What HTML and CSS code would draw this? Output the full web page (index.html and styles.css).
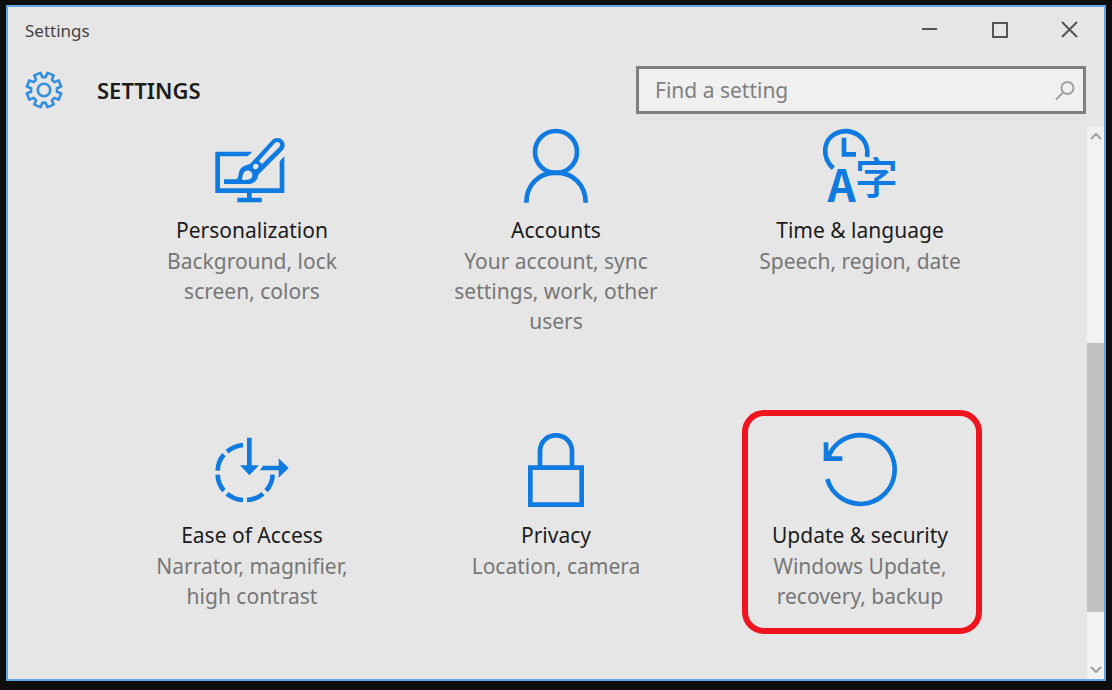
FILE: index.html
```html
<!DOCTYPE html>
<html lang="en">
<head>
<meta charset="utf-8">
<meta name="viewport" content="width=device-width, initial-scale=1">
<title>Settings</title>
<link rel="stylesheet" href="styles.css">
</head>
<body>
<div class="window">
  <div class="titlebar">
    <span class="titlebar-name">Settings</span>
    <div class="window-controls">
      <button type="button" class="window-button" aria-label="Minimize"><svg width="18" height="18" viewBox="0 0 18 18"><path d="M2 8h15"/></svg></button>
      <button type="button" class="window-button" aria-label="Maximize"><svg width="18" height="18" viewBox="0 0 18 18"><rect x="3" y="2" width="14" height="14"/></svg></button>
      <button type="button" class="window-button" aria-label="Close"><svg width="18" height="18" viewBox="0 0 18 18"><path d="M2 1l15 15M17 1L2 16"/></svg></button>
    </div>
  </div>
  <header class="header">
    <svg class="gear" width="38" height="38" viewBox="-19 -19 38 38" aria-hidden="true">
      <path id="gear-shape"/>
      <circle r="6.3"/>
    </svg>
    <h1 class="heading">SETTINGS</h1>
    <label class="search">
      <input class="search-input" type="text" placeholder="Find a setting" aria-label="Find a setting">
      <svg width="22" height="22" viewBox="0 0 22 22" aria-hidden="true"><circle cx="13.5" cy="9" r="6"/><path d="M9.3 13.3L2 20.5"/></svg>
    </label>
  </header>
  <div class="content">
    <main class="tiles">
      <a class="tile" href="#personalization">
        <svg class="tile-icon" viewBox="6 21 360 249" aria-hidden="true">
          <path d="M178 212V240M142 240H215"/>
          <path class="solid" fill-rule="evenodd" d="M76 95H187L173 109H90V205H269V124L283 109V219H76Z"/>
          <path class="solid" fill-rule="evenodd" d="M102 178H140C147 172 144 160 150 149C157 137 171 135 180 132L246 61C267 40 297 69 278 91L205 164C204 180 191 192 177 192H102Z
            M162 157C157 164 158 171 156 179C168 181 187 180 187 166C187 150 170 147 162 157Z
            M191 134C184 143 195 153 203 145C211 136 199 126 191 134Z
            M207 123L216 132L268 81C276 71 263 60 254 70Z"/>
        </svg>
        <h2 class="tile-title">Personalization</h2>
        <p class="tile-text">Background, lock<br>screen, colors</p>
      </a>
      <a class="tile" href="#accounts">
        <svg class="tile-icon" viewBox="-12 21 360 249" aria-hidden="true">
          <circle cx="168" cy="96" r="63"/>
          <path d="M79 248C79 195 116 158 168 158S257 195 257 248"/>
        </svg>
        <h2 class="tile-title">Accounts</h2>
        <p class="tile-text">Your account, sync<br>settings, work, other<br>users</p>
      </a>
      <a class="tile" href="#time-language">
        <svg class="tile-icon" viewBox="0 21 360 249" aria-hidden="true">
          <path d="M100 145C65 113 69 63 103 43C150 15 211 52 201 111M132 53V103H168"/>
          <text class="latin-letter" x="125" y="247">A</text>
          <text class="han-letter" x="229" y="222">字</text>
        </svg>
        <h2 class="tile-title">Time &amp; language</h2>
        <p class="tile-text">Speech, region, date</p>
      </a>
      <a class="tile" href="#ease-of-access">
        <svg class="tile-icon" viewBox="6 21 360 249" aria-hidden="true">
          <path d="M159 60Q132 63 111 80M102 89Q84 108 83 137M83 149Q84 178 102 197M111 206Q132 224 159 225M171 225Q198 224 219 206M228 197Q247 178 248 149M178 38V130M219 129H275"/>
          <path class="solid" d="M150 121H207L178 151ZM266 100L296 129L266 158ZM210 136L219 122V136Z"/>
        </svg>
        <h2 class="tile-title">Ease of Access</h2>
        <p class="tile-text">Narrator, magnifier,<br>high contrast</p>
      </a>
      <a class="tile" href="#privacy">
        <svg class="tile-icon" viewBox="-12 21 360 249" aria-hidden="true">
          <path d="M91 128H245V239H91ZM120 128V80C120 15 216 15 216 80V128"/>
        </svg>
        <h2 class="tile-title">Privacy</h2>
        <p class="tile-text">Location, camera</p>
      </a>
      <a class="tile tile-highlighted" href="#update-security">
        <svg class="tile-icon" viewBox="0 21 360 249" aria-hidden="true">
          <path d="M82 162A103 103 0 1 0 84 99M78 52V101H127"/>
        </svg>
        <h2 class="tile-title">Update &amp; security</h2>
        <p class="tile-text">Windows Update,<br>recovery, backup</p>
      </a>
    </main>
    <div class="scrollbar">
      <button type="button" class="scroll-button" aria-label="Scroll up"><svg width="12" height="8" viewBox="0 0 12 8"><path d="M1 7l5-5 5 5"/></svg></button>
      <div class="scroll-track"><div class="scroll-thumb"></div></div>
      <button type="button" class="scroll-button" aria-label="Scroll down"><svg width="12" height="8" viewBox="0 0 12 8"><path d="M1 1l5 5 5-5"/></svg></button>
    </div>
  </div>
</div>
<script src="gear.js"></script>
</body>
</html>
```

FILE: gear.js
```js
// Builds the outline of the eight-toothed gear.
const points = [];
const add = (radius, degrees) => {
  const angle = degrees * Math.PI / 180;
  points.push((radius * Math.cos(angle)).toFixed(2) + " " + (radius * Math.sin(angle)).toFixed(2));
};
for (let tooth = 0; tooth < 8; tooth++) {
  const middle = tooth * 45 + 22.5;
  add(13, middle - 15);
  add(17.5, middle - 11);
  add(17.5, middle + 11);
  add(13, middle + 15);
}
document.getElementById("gear-shape").setAttribute("d", "M" + points.join("L") + "Z");
```

FILE: styles.css
```css
*,
*::after {
  box-sizing: border-box;
}

body {
  display: flex;
  min-height: 100vh;
  margin: 0;
  padding: 5px 6px 9px;
  background: #0d0d0d;
  font-family: "Noto Sans", "Open Sans", sans-serif;
  color: #1c1c1c;
}

.window {
  display: flex;
  flex: 1;
  flex-direction: column;
  border: 2px solid #5ea6e3;
  background: #e6e6e6;
}

button {
  display: flex;
  align-items: center;
  justify-content: center;
  padding: 0;
  border: 0;
  background: transparent;
}

svg {
  fill: none;
}

.titlebar {
  display: flex;
  align-items: center;
  justify-content: space-between;
  height: 46px;
  padding-left: 17px;
}

.titlebar-name {
  font-size: 17px;
  color: #444;
}

.window-controls {
  display: flex;
}

.window-button {
  width: 70px;
  height: 46px;
}

.window-button svg {
  stroke: #555;
  stroke-width: 2;
}

.header {
  display: flex;
  align-items: center;
  padding: 13px 18px 13px 17px;
}

.gear {
  stroke: #338fe0;
  stroke-width: 2.6;
  stroke-linejoin: round;
}

.heading {
  margin: 0 auto 0 34px;
  font-size: 22px;
  font-weight: 600;
}

.search {
  display: flex;
  align-items: center;
  width: 450px;
  height: 48px;
  padding: 0 7px 0 16px;
  border: 3px solid #808080;
  background: #f0f0f0;
}

.search-input {
  flex: 1;
  min-width: 0;
  padding: 0;
  border: 0;
  outline: 0;
  background: transparent;
  font: inherit;
  font-size: 21px;
}

.search-input::placeholder {
  color: #808080;
}

.search svg {
  stroke: #a0a0a0;
  stroke-width: 2;
}

.content {
  display: flex;
  flex: 1;
}

.tiles {
  display: grid;
  flex: 1;
  grid-template-columns: repeat(3, 1fr);
  align-content: start;
  row-gap: 96px;
  padding: 0 75px 0 92px;
}

.tile {
  position: relative;
  display: flex;
  flex-direction: column;
  align-items: center;
  color: inherit;
  text-align: center;
  text-decoration: none;
}

.tile-icon {
  width: 120px;
  height: 83px;
  margin-bottom: 5px;
  overflow: visible;
  stroke: #0f7be0;
  stroke-width: 14;
}

.tile-icon .solid,
.tile-icon text {
  fill: #0f7be0;
  stroke: none;
  text-anchor: middle;
}

.latin-letter {
  font: bold 132px "Noto Sans CJK SC", sans-serif;
}

.han-letter {
  font: 500 130px "Noto Sans CJK SC", sans-serif;
}

.tile-title {
  margin: 0;
  font-size: 21px;
  font-weight: 400;
  line-height: 31px;
}

.tile-text {
  margin: 0;
  font-size: 21px;
  line-height: 30px;
  color: #777;
}

.tile-highlighted::after {
  content: "";
  position: absolute;
  inset: -22px 30px auto 34px;
  height: 224px;
  border: 6px solid #f0141e;
  border-radius: 22px;
}

.scrollbar {
  display: flex;
  flex-direction: column;
  width: 17px;
  background: #f2f2f2;
}

.scroll-button {
  height: 18px;
}

.scroll-button svg {
  stroke: #a0a0a0;
  stroke-width: 2;
}

.scroll-track {
  display: flex;
  flex: 1;
  flex-direction: column;
  justify-content: flex-end;
  padding-bottom: 49px;
}

.scroll-thumb {
  height: 269px;
  background: #c2c2c2;
}
```
